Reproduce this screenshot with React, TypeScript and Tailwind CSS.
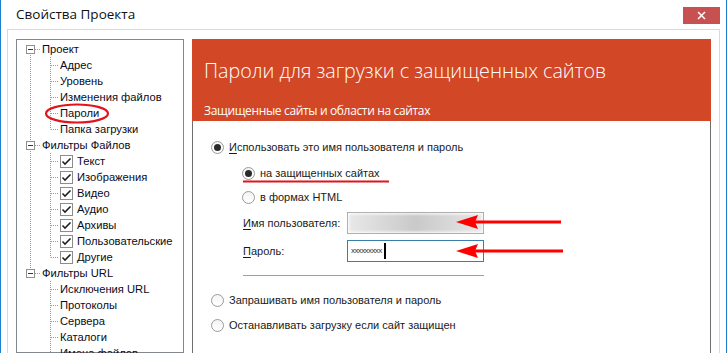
import React from "react";

const DOT = "#9a9a9a";

type Row =
  | { kind: "root"; label: string; first: boolean; last: boolean }
  | { kind: "child"; label: string; parentLast: boolean; lastChild: boolean; check?: boolean };

const groups = [
  { label: "Проект", children: ["Адрес", "Уровень", "Изменения файлов", "Пароли", "Папка загрузки"], check: false },
  { label: "Фильтры Файлов", children: ["Текст", "Изображения", "Видео", "Аудио", "Архивы", "Пользовательские", "Другие"], check: true },
  { label: "Фильтры URL", children: ["Исключения URL", "Протоколы", "Сервера", "Каталоги", "Имена файлов", "Типы файлов"], check: false },
];

const rows: Row[] = [];
groups.forEach((g, gi) => {
  rows.push({ kind: "root", label: g.label, first: gi === 0, last: gi === groups.length - 1 });
  g.children.forEach((c, ci) =>
    rows.push({ kind: "child", label: c, parentLast: gi === groups.length - 1, lastChild: ci === g.children.length - 1, check: g.check })
  );
});

function RootGlyph({ first, last }: { first: boolean; last: boolean }) {
  return (
    <svg width="25" height="16" className="shrink-0">
      {!first && <line x1="13.5" y1="0" x2="13.5" y2="4" stroke={DOT} strokeDasharray="1 1" />}
      {!last && <line x1="13.5" y1="12" x2="13.5" y2="16" stroke={DOT} strokeDasharray="1 1" />}
      <rect x="9.5" y="4.5" width="8" height="8" fill="#fff" stroke="#919191" />
      <line x1="11" y1="8.5" x2="16" y2="8.5" stroke="#1c3d7a" />
      <line x1="18" y1="8.5" x2="24" y2="8.5" stroke={DOT} strokeDasharray="1 1" />
    </svg>
  );
}

function ChildGlyph({ parentLast, lastChild }: { parentLast: boolean; lastChild: boolean }) {
  return (
    <svg width="43" height="16" className="shrink-0">
      {!parentLast && <line x1="13.5" y1="0" x2="13.5" y2="16" stroke={DOT} strokeDasharray="1 1" />}
      <line x1="33.5" y1="0" x2="33.5" y2={lastChild ? 8.5 : 16} stroke={DOT} strokeDasharray="1 1" />
      <line x1="34" y1="8.5" x2="42" y2="8.5" stroke={DOT} strokeDasharray="1 1" />
    </svg>
  );
}

function Check() {
  return (
    <span className="w-[13px] h-[13px] border border-[#8c8c8c] bg-white shrink-0 flex items-center justify-center mr-[4px]">
      <svg width="11" height="11" viewBox="0 0 11 11">
        <path d="M1.5 5.5 L4 8 L9.5 2.5" fill="none" stroke="#222" strokeWidth="1.6" />
      </svg>
    </span>
  );
}

function Radio({ on }: { on?: boolean }) {
  return (
    <span className="w-[13px] h-[13px] rounded-full border border-[#9a9a9a] bg-gradient-to-b from-[#f4f4f4] to-white flex items-center justify-center shrink-0">
      {on && <span className="w-[7px] h-[7px] rounded-full bg-[#2a2a2a]" />}
    </span>
  );
}

export default function App() {
  return (
    <div
      className="w-[727px] h-[353px] overflow-hidden bg-white border-x border-[#1d7fd0] relative flex flex-col"
      style={{ fontFamily: '"Liberation Sans", Arial, sans-serif' }}
    >
      {/* title bar */}
      <div className="h-[29px] flex justify-between shrink-0">
        <div className="pl-[15px] pt-[4px] text-[13.5px] text-[#111]" style={{ fontFamily: '"Open Sans", sans-serif' }}>
          Свойства Проекта
        </div>
        <div className="mt-[7px] mr-[6px] w-[37px] h-[17px] bg-[#c75050] flex items-center justify-center">
          <svg width="9" height="9" viewBox="0 0 9 9">
            <path d="M1 1 L8 8 M8 1 L1 8" stroke="#fff" strokeWidth="1.5" />
          </svg>
        </div>
      </div>

      {/* inner frame */}
      <div className="mx-[6px] flex-1 border-t border-x border-[#d9d9d9] flex pt-[9px] pl-[8px] pr-[8px] gap-[8px] min-h-0">
        {/* tree */}
        <div className="w-[168px] shrink-0 border border-[#828790] bg-white flex flex-col pt-px text-[11.2px] text-[#0a0a20]">
          {rows.map((r, i) =>
            r.kind === "root" ? (
              <div key={i} className="h-[16px] flex items-center">
                <RootGlyph first={r.first} last={r.last} />
                <span className="leading-[16px]">{r.label}</span>
              </div>
            ) : (
              <div key={i} className="h-[16px] flex items-center">
                <ChildGlyph parentLast={r.parentLast} lastChild={r.lastChild} />
                {r.check && <Check />}
                <span className="leading-[16px] whitespace-nowrap">{r.label}</span>
              </div>
            )
          )}
        </div>

        {/* content panel */}
        <div className="w-[519px] shrink-0 border-x border-[#6f6f6f] flex flex-col">
          <div className="h-[82px] -mx-px bg-[#d24726] text-white pl-[12px] pt-[18px] shrink-0" style={{ fontFamily: '"Open Sans", sans-serif' }}>
            <div className="text-[19.7px] leading-[28px] font-light">Пароли для загрузки с защищенных сайтов</div>
            <div className="text-[12px] leading-[18px] mt-[17px] tracking-[-0.35px]">Защищенные сайты и области на сайтах</div>
          </div>

          <div className="flex flex-col pl-[18px] pt-[19px] text-[11px] text-[#1a1a1a]">
            <div className="h-[14px] flex items-center gap-[5px]">
              <Radio on />
              <span>
                <span className="underline underline-offset-2">И</span>спользовать это имя пользователя и пароль
              </span>
            </div>

            <div className="ml-[31px] mt-[12px] flex flex-col">
              <div className="h-[14px] flex items-center gap-[5px]">
                <Radio on />
                <span>на защищенных сайтах</span>
              </div>
              <div className="h-[14px] mt-[10px] flex items-center gap-[5px]">
                <Radio />
                <span>в формах HTML</span>
              </div>

              <div className="flex items-center mt-[8px] h-[22px] ml-[1px]">
                <span className="w-[104px]">
                  <span className="underline underline-offset-2">И</span>мя пользователя:
                </span>
                <div className="w-[137px] h-[22px] border border-[#a9a9a9] bg-white flex items-center px-[1px]">
                  <div className="h-[18px] w-full bg-gradient-to-r from-[#e8e8e8] via-[#c9c9c9] to-[#e6e6e6] blur-[1.5px]" />
                </div>
              </div>
              <div className="flex items-center mt-[6px] h-[22px] ml-[1px]">
                <span className="w-[104px]">
                  <span className="underline underline-offset-2">П</span>ароль:
                </span>
                <div className="w-[137px] h-[22px] border border-[#3a7fa8] bg-white flex items-center pl-[3px]">
                  <span className="text-[8px] leading-none tracking-[-0.6px] text-[#333]">xxxxxxxxx</span>
                  <span className="w-[2px] h-[16px] bg-black ml-[2px]" />
                </div>
              </div>
              <div className="mt-[13px] ml-[1px] w-[241px] h-px bg-[#a0a0a0]" />
            </div>

            <div className="h-[14px] mt-[17px] flex items-center gap-[5px]">
              <Radio />
              <span>Запрашивать имя пользователя и пароль</span>
            </div>
            <div className="h-[14px] mt-[11px] flex items-center gap-[5px]">
              <Radio />
              <span>Останавливать загрузку если сайт защищен</span>
            </div>
          </div>
        </div>
      </div>

      {/* red annotations overlay */}
      <svg className="absolute left-0 top-0 pointer-events-none" width="727" height="353">
        <ellipse cx="76" cy="113.5" rx="31" ry="9" fill="none" stroke="#e0141e" strokeWidth="2.2" />
        <line x1="242" y1="181.5" x2="388" y2="181.5" stroke="#e0141e" strokeWidth="2" />
        <line x1="470" y1="222" x2="560" y2="222" stroke="#f00" strokeWidth="3" />
        <path d="M455 222 L477 215 L474 222 L477 229 Z" fill="#f00" />
        <line x1="470" y1="251" x2="562" y2="251" stroke="#f00" strokeWidth="3" />
        <path d="M455 251 L477 244 L474 251 L477 258 Z" fill="#f00" />
      </svg>
    </div>
  );
}
